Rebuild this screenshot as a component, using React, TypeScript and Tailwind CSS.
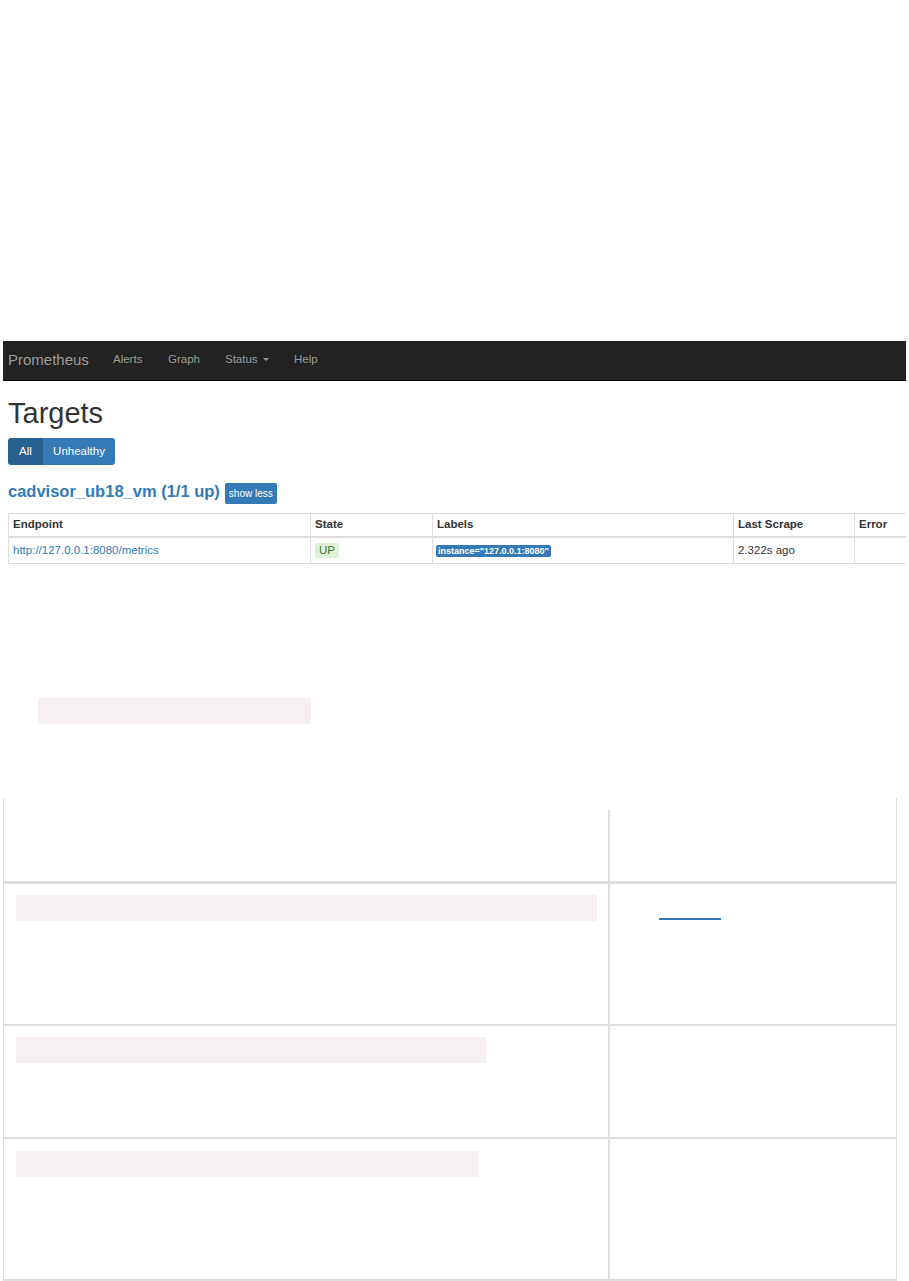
import React from "react"

const navLinks = [
  { label: "Alerts", w: "w-[55px]" },
  { label: "Graph", w: "w-[57px]" },
]

function Navbar() {
  return (
    <nav className="ml-[3px] w-[903px] h-[40px] bg-[#222] border-b border-[#080808] flex items-center pb-[2px]">
      <span className="pl-[5px] w-[110px] text-[15px] leading-[15px] text-[#9d9d9d]">Prometheus</span>
      {navLinks.map(l => (
        <span key={l.label} className={`${l.w} text-[11.5px] leading-[11.5px] text-[#9d9d9d]`}>
          {l.label}
        </span>
      ))}
      <span className="w-[69px] text-[11.5px] leading-[11.5px] text-[#9d9d9d] flex items-center">
        Status
        <span className="ml-[5px] inline-block w-0 h-0 border-l-[3px] border-r-[3px] border-t-[3px] border-l-transparent border-r-transparent border-t-[#9d9d9d]" />
      </span>
      <span className="text-[11.5px] leading-[11.5px] text-[#9d9d9d]">Help</span>
    </nav>
  )
}

function TargetsTable() {
  const cell = "border-l border-[#ddd] pl-[4px] flex items-center text-[11.5px] text-[#333]"
  return (
    <div className="mt-[9px] w-[898px]">
      <div className="grid grid-cols-[302px_122px_301px_121px_52px] border-t border-[#ddd] border-b-2 h-[25px]">
        <div className={`${cell} font-bold`}>Endpoint</div>
        <div className={`${cell} font-bold`}>State</div>
        <div className={`${cell} font-bold`}>Labels</div>
        <div className={`${cell} font-bold`}>Last Scrape</div>
        <div className={`${cell} font-bold`}>Error</div>
      </div>
      <div className="grid grid-cols-[302px_122px_301px_121px_52px] border-b border-[#ddd] h-[26px]">
        <div className={cell}>
          <a className="text-[#337ab7]">http://127.0.0.1:8080/metrics</a>
        </div>
        <div className={cell}>
          <span className="bg-[#dff0d8] text-[#3c763d] rounded-[3px] px-[4px] h-[15px] leading-[15px]">UP</span>
        </div>
        <div className={`${cell} !pl-[3px]`}>
          <span className="bg-[#337ab7] text-white font-bold text-[9px] leading-[12px] h-[12px] rounded-[2px] px-[2px]">
            instance="127.0.0.1:8080"
          </span>
        </div>
        <div className={cell}>2.322s ago</div>
        <div className={cell}></div>
      </div>
    </div>
  )
}

const rows = [
  { h: "h-[142px]", pt: "pt-[11px]", bar: "w-[581px]", link: true },
  { h: "h-[113px]", pt: "pt-[11px]", bar: "w-[470px]", link: false },
  { h: "h-[142px]", pt: "pt-[12px]", bar: "w-[462px]", link: false },
]

function RedactedTable() {
  return (
    <div className="mt-[74px] ml-[3px] w-[894px] border-l border-r border-[#ddd]">
      <div className="flex h-[86px] border-b-[3px] border-[#ddd]">
        <div className="w-[604px]" />
        <div className="flex-1 mt-[12px] border-l-2 border-[#ddd]" />
      </div>
      {rows.map((r, i) => (
        <div key={i} className={`flex ${r.h} border-b-2 border-[#ddd]`}>
          <div className={`w-[604px] pl-[12px] ${r.pt}`}>
            <div className={`${r.bar} h-[26px] bg-[#f7f0f2]`} />
          </div>
          <div className="flex-1 border-l-2 border-[#ddd]">
            {r.link && <div className="mt-[34px] ml-[49px] w-[62px] h-[2px] bg-[#337ab7]" />}
          </div>
        </div>
      ))}
    </div>
  )
}

export default function App() {
  return (
    <div className="w-[909px] h-[1281px] bg-white overflow-hidden pt-[341px] font-['Liberation_Sans',Arial,sans-serif]">
      <Navbar />
      <div className="pl-[8px]">
        <h1 className="mt-[18px] text-[29px] leading-[29px] text-[#333]">Targets</h1>
        <div className="mt-[10px] flex h-[27px] text-[11.5px] text-white">
          <button className="w-[35px] bg-[#28608f] rounded-l-[3px] flex items-center justify-center">All</button>
          <button className="w-[72px] bg-[#337ab7] rounded-r-[3px] flex items-center justify-center">Unhealthy</button>
        </div>
        <div className="mt-[16px] flex items-start">
          <h2 className="text-[16.5px] leading-[20px] font-bold text-[#337ab7]">cadvisor_ub18_vm (1/1 up)</h2>
          <button className="ml-[5px] mt-[2px] h-[21px] px-[4px] bg-[#337ab7] text-white text-[10px] rounded-[2px]">
            show less
          </button>
        </div>
        <TargetsTable />
      </div>
      <div className="mt-[134px] ml-[38px] w-[273px] h-[26px] bg-[#f7f0f2]" />
      <RedactedTable />
    </div>
  )
}
